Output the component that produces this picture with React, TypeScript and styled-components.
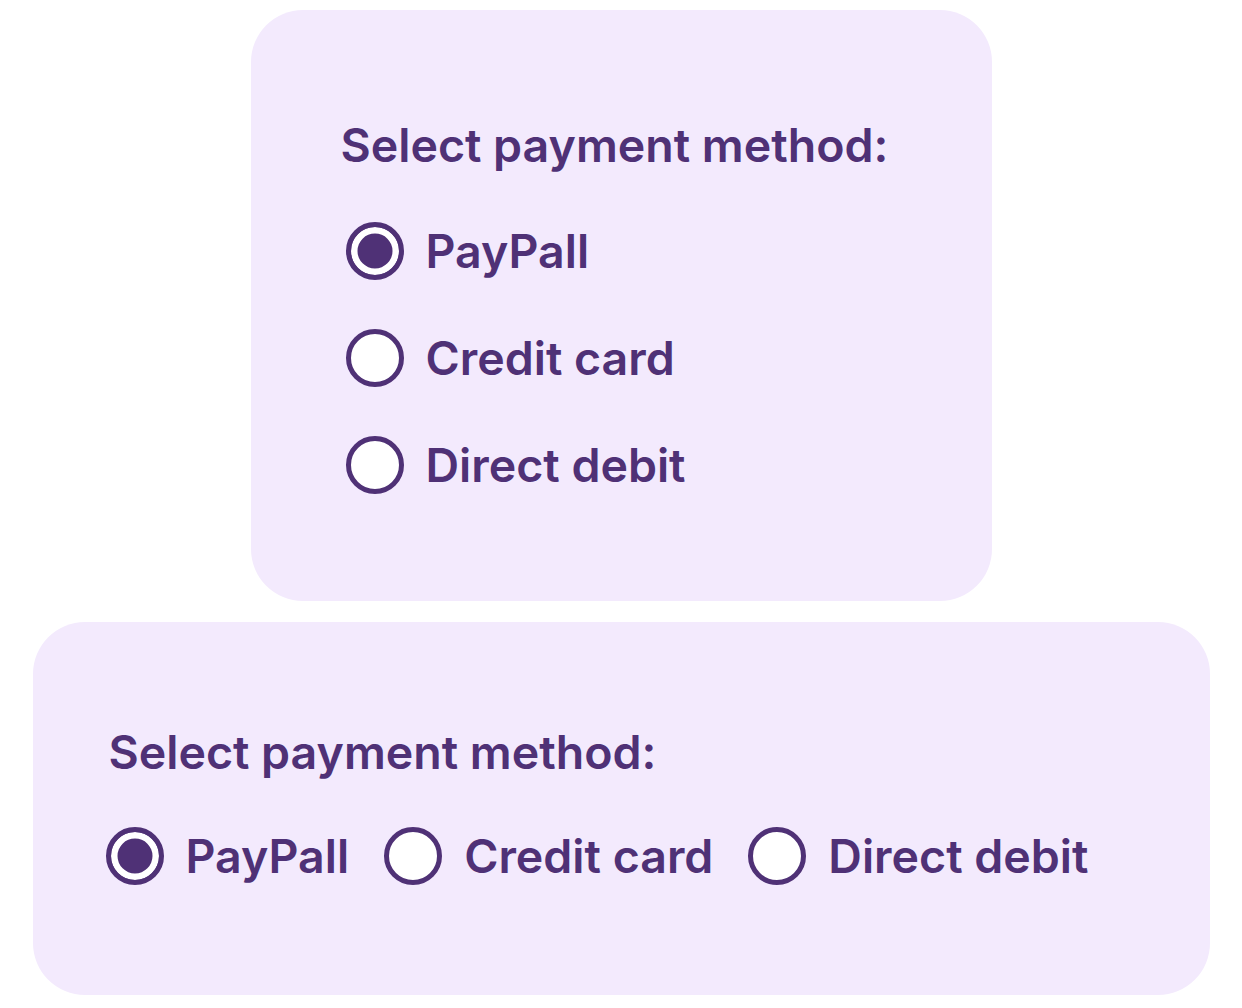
import styled, { createGlobalStyle } from 'styled-components';

const GlobalStyle = createGlobalStyle`
    body {
        margin: 0;
        background: #ffffff;
        font-family: Inter, "Noto Sans", sans-serif;
    }
`;

const Page = styled.div`
    display: flex;
    flex-direction: column;
    align-items: center;
    gap: 21px;
    padding-top: 10px;
`;

const Card: any = styled.div`
    box-sizing: border-box;
    background: #f3eafd;
    border-radius: 52px;
    width: ${(props: any) => (props.wide ? '1177px' : '741px')};
    height: ${(props: any) => (props.wide ? '373px' : '591px')};
    padding: ${(props: any) => (props.wide ? '103px 0 0 73px' : '108px 0 0 90px')};
`;

const Title: any = styled.div`
    color: #4f3176;
    font-weight: 600;
    font-size: 46.5px;
    line-height: 54px;
    margin-bottom: ${(props: any) => (props.wide ? '48px' : '50px')};
    padding-left: ${(props: any) => (props.wide ? '3px' : '0')};
`;

const Group: any = styled.div`
    display: flex;
    flex-direction: ${(props: any) => (props.row ? 'row' : 'column')};
    gap: ${(props: any) => (props.row ? '35px' : '49px')};
    padding-left: ${(props: any) => (props.row ? '0' : '5px')};
`;

const Option = styled.label`
    display: flex;
    align-items: center;
    gap: 22px;
    color: #4f3176;
    font-weight: 600;
    font-size: 46.5px;
    line-height: 58px;
    cursor: pointer;
`;

const Dot: any = styled.span`
    box-sizing: border-box;
    flex: none;
    width: 58px;
    height: 58px;
    border-radius: 50%;
    border: 5px solid #4f3176;
    background: ${(props: any) => (props.checked ? '#4f3176' : '#ffffff')};
    box-shadow: ${(props: any) => (props.checked ? 'inset 0 0 0 6.5px #ffffff' : 'none')};
`;

const options = ['PayPall', 'Credit card', 'Direct debit'];

const PaymentCard = ({ wide }: { wide?: boolean }) => (
    <Card wide={wide}>
        <Title wide={wide}>Select payment method:</Title>
        <Group row={wide}>
            {options.map((name, i) => (
                <Option key={name}>
                    <Dot checked={i === 0} />
                    {name}
                </Option>
            ))}
        </Group>
    </Card>
);

const App = () => (
    <>
        <GlobalStyle />
        <Page>
            <PaymentCard />
            <PaymentCard wide />
        </Page>
    </>
);

export default App;
